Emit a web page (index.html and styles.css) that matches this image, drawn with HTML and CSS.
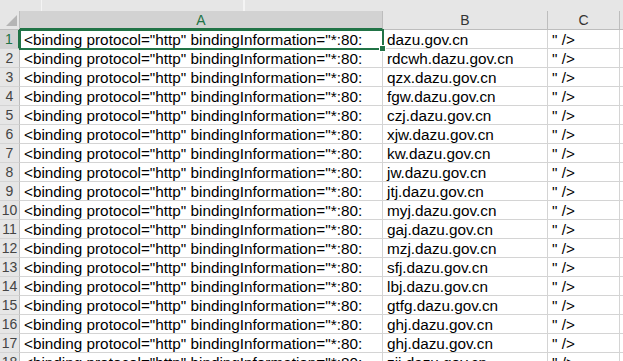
FILE: index.html
```html
<!DOCTYPE html>
<html lang="en">
<head>
    <meta charset="UTF-8">
    <title>Sheet1</title>
    <link rel="stylesheet" href="styles.css">
</head>
<body>

<div class="topbar">
    <span class="tb-seg tb-first"></span>
    <span class="tb-seg tb-second"></span>
    <span class="tb-seg"></span>
</div>

<div class="sheet">
    <!-- header row -->
    <div class="corner"><span class="corner-tri"></span></div>
    <div class="colhead active">A</div>
    <div class="colhead">B</div>
    <div class="colhead">C</div>
    <div class="colhead rest"></div>

    <div class="rowhead active">1</div>
    <div class="cell selected">&lt;binding protocol="http" bindingInformation="*:80:<span class="handle"></span></div>
    <div class="cell">dazu.gov.cn</div>
    <div class="cell">" /&gt;</div>
    <div class="cell rest"></div>

    <div class="rowhead">2</div>
    <div class="cell">&lt;binding protocol="http" bindingInformation="*:80:</div>
    <div class="cell">rdcwh.dazu.gov.cn</div>
    <div class="cell">" /&gt;</div>
    <div class="cell rest"></div>

    <div class="rowhead">3</div>
    <div class="cell">&lt;binding protocol="http" bindingInformation="*:80:</div>
    <div class="cell">qzx.dazu.gov.cn</div>
    <div class="cell">" /&gt;</div>
    <div class="cell rest"></div>

    <div class="rowhead">4</div>
    <div class="cell">&lt;binding protocol="http" bindingInformation="*:80:</div>
    <div class="cell">fgw.dazu.gov.cn</div>
    <div class="cell">" /&gt;</div>
    <div class="cell rest"></div>

    <div class="rowhead">5</div>
    <div class="cell">&lt;binding protocol="http" bindingInformation="*:80:</div>
    <div class="cell">czj.dazu.gov.cn</div>
    <div class="cell">" /&gt;</div>
    <div class="cell rest"></div>

    <div class="rowhead">6</div>
    <div class="cell">&lt;binding protocol="http" bindingInformation="*:80:</div>
    <div class="cell">xjw.dazu.gov.cn</div>
    <div class="cell">" /&gt;</div>
    <div class="cell rest"></div>

    <div class="rowhead">7</div>
    <div class="cell">&lt;binding protocol="http" bindingInformation="*:80:</div>
    <div class="cell">kw.dazu.gov.cn</div>
    <div class="cell">" /&gt;</div>
    <div class="cell rest"></div>

    <div class="rowhead">8</div>
    <div class="cell">&lt;binding protocol="http" bindingInformation="*:80:</div>
    <div class="cell">jw.dazu.gov.cn</div>
    <div class="cell">" /&gt;</div>
    <div class="cell rest"></div>

    <div class="rowhead">9</div>
    <div class="cell">&lt;binding protocol="http" bindingInformation="*:80:</div>
    <div class="cell">jtj.dazu.gov.cn</div>
    <div class="cell">" /&gt;</div>
    <div class="cell rest"></div>

    <div class="rowhead">10</div>
    <div class="cell">&lt;binding protocol="http" bindingInformation="*:80:</div>
    <div class="cell">myj.dazu.gov.cn</div>
    <div class="cell">" /&gt;</div>
    <div class="cell rest"></div>

    <div class="rowhead">11</div>
    <div class="cell">&lt;binding protocol="http" bindingInformation="*:80:</div>
    <div class="cell">gaj.dazu.gov.cn</div>
    <div class="cell">" /&gt;</div>
    <div class="cell rest"></div>

    <div class="rowhead">12</div>
    <div class="cell">&lt;binding protocol="http" bindingInformation="*:80:</div>
    <div class="cell">mzj.dazu.gov.cn</div>
    <div class="cell">" /&gt;</div>
    <div class="cell rest"></div>

    <div class="rowhead">13</div>
    <div class="cell">&lt;binding protocol="http" bindingInformation="*:80:</div>
    <div class="cell">sfj.dazu.gov.cn</div>
    <div class="cell">" /&gt;</div>
    <div class="cell rest"></div>

    <div class="rowhead">14</div>
    <div class="cell">&lt;binding protocol="http" bindingInformation="*:80:</div>
    <div class="cell">lbj.dazu.gov.cn</div>
    <div class="cell">" /&gt;</div>
    <div class="cell rest"></div>

    <div class="rowhead">15</div>
    <div class="cell">&lt;binding protocol="http" bindingInformation="*:80:</div>
    <div class="cell">gtfg.dazu.gov.cn</div>
    <div class="cell">" /&gt;</div>
    <div class="cell rest"></div>

    <div class="rowhead">16</div>
    <div class="cell">&lt;binding protocol="http" bindingInformation="*:80:</div>
    <div class="cell">ghj.dazu.gov.cn</div>
    <div class="cell">" /&gt;</div>
    <div class="cell rest"></div>

    <div class="rowhead">17</div>
    <div class="cell">&lt;binding protocol="http" bindingInformation="*:80:</div>
    <div class="cell">ghj.dazu.gov.cn</div>
    <div class="cell">" /&gt;</div>
    <div class="cell rest"></div>

    <div class="rowhead">18</div>
    <div class="cell">&lt;binding protocol="http" bindingInformation="*:80:</div>
    <div class="cell">zjj.dazu.gov.cn</div>
    <div class="cell">" /&gt;</div>
    <div class="cell rest"></div>
</div>

</body>
</html>
```

FILE: styles.css
```css
body {
    margin: 0;
    background: #fff;
    font-family: 'Liberation Sans', Arial, sans-serif;
    overflow: hidden;
}
.topbar {
    height: 11px;
    background: #e6e6e6;
    display: flex;
}
.tb-seg {
    border-right: 1px solid #f4f4f4;
}
.tb-first {
    width: 41px;
}
.tb-second {
    width: 201px;
}
.sheet {
    display: grid;
    grid-template-columns: 20px 363px 165px 72px 1fr;
    grid-auto-rows: 19px;
}
.corner {
    background: #e6e6e6;
    border-right: 1px solid #bdbdbd;
    border-bottom: 1px solid #bdbdbd;
    position: relative;
}
.corner-tri {
    position: absolute;
    right: 2px;
    bottom: 3px;
    width: 0;
    height: 0;
    border-left: 11px solid transparent;
    border-bottom: 11px solid #b5b5b5;
}
.colhead {
    background: #e6e6e6;
    border-right: 1px solid #bdbdbd;
    border-bottom: 1px solid #bdbdbd;
    font-size: 14px;
    line-height: 19px;
    text-align: center;
    color: #333;
}
.colhead.active {
    background: #d2d2d2;
    color: #217346;
    border-bottom: 2px solid #217346;
}
.colhead.rest {
    border-right: none;
}
.rowhead {
    background: #e6e6e6;
    border-right: 1px solid #bdbdbd;
    border-bottom: 1px solid #d4d4d4;
    font-size: 14px;
    line-height: 19px;
    text-align: center;
    color: #444;
}
.rowhead.active {
    background: #d2d2d2;
    color: #217346;
    border-right: 2px solid #217346;
}
.cell {
    border-right: 1px solid #d4d4d4;
    border-bottom: 1px solid #d4d4d4;
    font-size: 15.3px;
    line-height: 19px;
    padding-left: 4px;
    white-space: nowrap;
    overflow: hidden;
    color: #000;
}
.cell.rest {
    border-right: none;
}
.cell.selected {
    position: relative;
    overflow: visible;
    outline: 2px solid #217346;
    outline-offset: -1px;
}
.handle {
    position: absolute;
    right: -4px;
    bottom: -4px;
    width: 5px;
    height: 5px;
    background: #217346;
    border: 1px solid #fff;
}
```
